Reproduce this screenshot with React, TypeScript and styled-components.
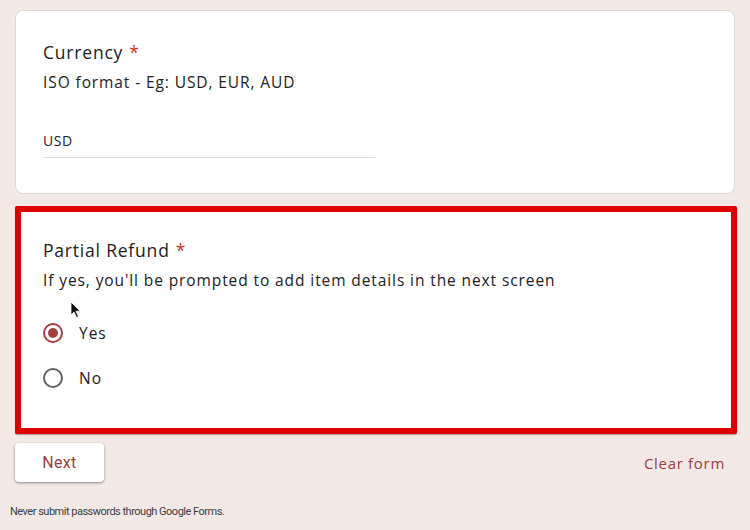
import React from "react";
import styled, { createGlobalStyle } from "styled-components";

const GlobalStyle = createGlobalStyle`
  html, body {
    margin: 0;
    padding: 0;
    background: #f2e9e7;
  }
  body {
    font-family: "Open Sans", "Noto Sans", sans-serif;
    color: #202124;
  }
`;

const Page = styled.div`
  position: relative;
  width: 750px;
  height: 530px;
  overflow: hidden;
  box-sizing: border-box;
  padding: 10px 14px 0 15px;
  display: flex;
  flex-direction: column;
`;

const Card = styled.div<{ $highlight?: boolean }>`
  background: #fff;
  box-sizing: border-box;
  border-radius: ${(p) => (p.$highlight ? "2px" : "8px")};
  border: ${(p) => (p.$highlight ? "6px solid #e10000" : "1px solid #dcd7d6")};
  box-shadow: ${(p) => (p.$highlight ? "0 1px 1px rgba(0,0,0,0.35)" : "none")};
  padding: ${(p) => (p.$highlight ? "26px 22px 30px" : "29px 27px 35px")};
  margin-top: ${(p) => (p.$highlight ? "12px" : "0")};
  width: ${(p) => (p.$highlight ? "722px" : "720px")};
  display: flex;
  flex-direction: column;
`;

const Title = styled.div`
  font-size: 17.5px;
  line-height: 24px;
  letter-spacing: 0.8px;
  color: #202124;
`;

const Star = styled.span`
  color: #d93025;
  margin-left: 6px;
`;

const Description = styled.div`
  margin-top: 6px;
  font-size: 15.5px;
  line-height: 24px;
  letter-spacing: 0.9px;
  color: #202124;
`;

const Field = styled.div`
  margin-top: 31px;
  width: 332px;
  height: 33px;
  box-sizing: border-box;
  border-bottom: 1px solid #e3dfdf;
  font-size: 14px;
  line-height: 32px;
  letter-spacing: 0.6px;
  color: #202124;
`;

const Options = styled.div`
  margin-top: 21px;
  display: flex;
  flex-direction: column;
  gap: 5px;
`;

const Option = styled.label`
  display: flex;
  align-items: center;
  height: 40px;
  gap: 16px;
  font-size: 15.5px;
  letter-spacing: 1px;
  color: #202124;
`;

const Radio = styled.span<{ $checked?: boolean }>`
  width: 20px;
  height: 20px;
  box-sizing: border-box;
  border-radius: 50%;
  border: 2px solid ${(p) => (p.$checked ? "#a3403f" : "#5f6368")};
  display: flex;
  align-items: center;
  justify-content: center;
  &::after {
    content: "";
    width: 10px;
    height: 10px;
    border-radius: 50%;
    background: ${(p) => (p.$checked ? "#a3403f" : "transparent")};
  }
`;

const Actions = styled.div`
  margin-top: 9px;
  display: flex;
  align-items: center;
  justify-content: space-between;
  padding-right: 11px;
`;

const NextButton = styled.button`
  width: 89px;
  height: 39px;
  border: none;
  border-radius: 4px;
  background: #fff;
  box-shadow: 0 1px 2px rgba(0, 0, 0, 0.3), 0 1px 3px 1px rgba(0, 0, 0, 0.1);
  font-family: Roboto, "Liberation Sans", sans-serif;
  font-size: 16px;
  font-weight: 400;
  color: #9a3e3e;
  letter-spacing: 0.3px;
  cursor: pointer;
`;

const ClearLink = styled.span`
  font-family: "Open Sans", sans-serif;
  font-size: 15px;
  color: #9a3e3e;
  letter-spacing: 0.7px;
`;

const Footer = styled.div`
  margin-top: 23px;
  margin-left: -5px;
  font-family: Roboto, "Liberation Sans", sans-serif;
  font-size: 11px;
  letter-spacing: -0.5px;
  color: #3c4043;
`;

const Pointer = styled.svg`
  position: absolute;
  left: 70px;
  top: 301px;
`;

export default function App() {
  return (
    <>
      <GlobalStyle />
      <Page>
        <Card>
          <Title>
            Currency<Star>*</Star>
          </Title>
          <Description>ISO format - Eg: USD, EUR, AUD</Description>
          <Field>USD</Field>
        </Card>
        <Card $highlight>
          <Title>
            Partial Refund<Star>*</Star>
          </Title>
          <Description>
            If yes, you'll be prompted to add item details in the next screen
          </Description>
          <Options>
            <Option>
              <Radio $checked />
              Yes
            </Option>
            <Option>
              <Radio />
              No
            </Option>
          </Options>
        </Card>
        <Actions>
          <NextButton>Next</NextButton>
          <ClearLink>Clear form</ClearLink>
        </Actions>
        <Footer>Never submit passwords through Google Forms.</Footer>
        <Pointer width="12" height="18" viewBox="0 0 12 18">
          <path
            d="M1 1 L1 14 L4 11 L6.5 16.5 L8.5 15.6 L6 10.2 L10.2 10.2 Z"
            fill="#111"
            stroke="#fff"
            strokeWidth="0.8"
          />
        </Pointer>
      </Page>
    </>
  );
}
